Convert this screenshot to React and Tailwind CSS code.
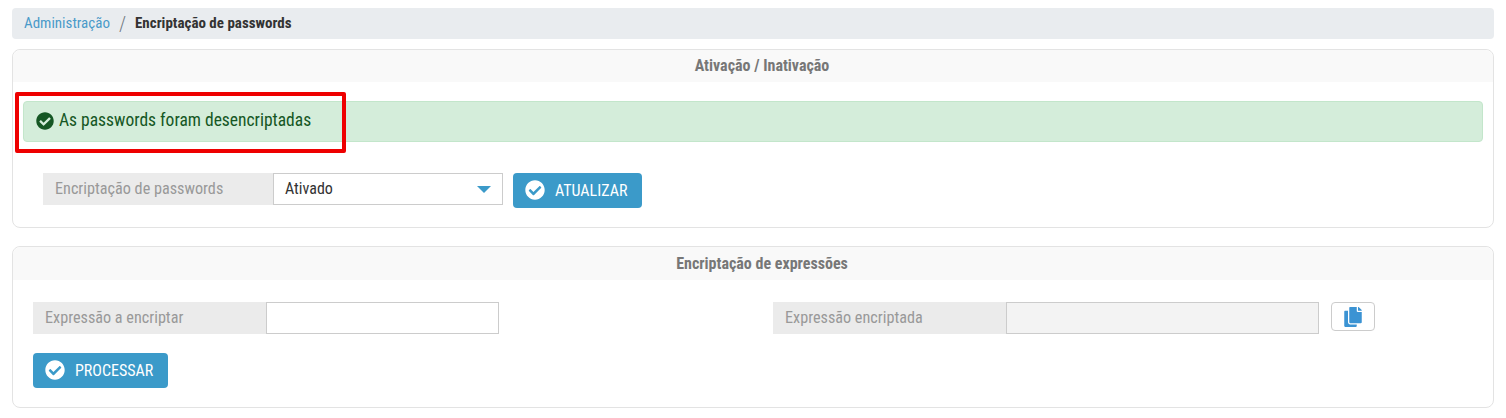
import React from "react";
import { FaCheckCircle, FaCopy } from "react-icons/fa";

const font = { fontFamily: "Roboto, sans-serif", fontStretch: "75%" };

function Btn({ label, width }) {
  return (
    <button className={`${width} h-[35px] rounded-[4px] bg-[#3b9ac9] text-white flex items-center pl-[12px] text-[16px]`}>
      <FaCheckCircle className="text-[20px] mr-[10px] shrink-0 -mt-[1px]" />
      <span className="whitespace-nowrap">{label}</span>
    </button>
  );
}

function Label({ children, width }) {
  return (
    <div className={`${width} h-[32px] bg-[#ebebeb] text-[#999999] text-[16.2px] flex items-center pl-[12px] shrink-0 whitespace-nowrap`}>
      {children}
    </div>
  );
}

function Head({ children, height }) {
  return (
    <div className={`${height} bg-[#f9f9f9] rounded-t-[8px] flex items-center justify-center pl-[18px] text-[16px] font-bold text-[#777777] whitespace-nowrap`}>
      {children}
    </div>
  );
}

export default function App() {
  return (
    <div className="relative w-[1506px] h-[418px] bg-white overflow-hidden pt-[8px] px-[12px]" style={font}>
      <div className="h-[31px] bg-[#e9ecef] rounded-[4px] flex items-center pl-[12px] text-[15px] whitespace-nowrap">
        <a className="text-[#4a9ac9] w-[86px]">Administração</a>
        <span className="text-[#6c757d] text-[20px] leading-none w-[25px] text-center font-light">/</span>
        <span className="font-bold text-[#333333]">Encriptação de passwords</span>
      </div>

      <div className="mt-[10px] h-[179px] border border-[#e3e3e3] rounded-[8px]">
        <Head height="h-[32px]">Ativação / Inativação</Head>
        <div className="mt-[19px] mx-[10px] h-[41px] bg-[#d4edda] border border-[#c3e6cb] rounded-[4px] flex items-center pl-[12px] text-[#155724] text-[17.5px] whitespace-nowrap">
          <FaCheckCircle className="text-[18px] mr-[5px] shrink-0 -mt-[2px]" />
          <span className="-mt-[2px]">As passwords foram desencriptadas</span>
        </div>
        <div className="mt-[31px] ml-[30px] flex items-start">
          <Label width="w-[230px]">Encriptação de passwords</Label>
          <div className="w-[230px] h-[32px] border border-[#cccccc] bg-white flex items-center justify-between pl-[11px] pr-[11px] text-[16px] text-[#333333]">
            <span>Ativado</span>
            <span className="w-0 h-0 border-l-[7px] border-r-[7px] border-t-[7px] border-l-transparent border-r-transparent border-t-[#3b9ac9]" />
          </div>
          <div className="ml-[10px]"><Btn label="ATUALIZAR" width="w-[129px]" /></div>
        </div>
      </div>

      <div className="mt-[18px] h-[162px] border border-[#e3e3e3] rounded-[8px]">
        <Head height="h-[33px]">Encriptação de expressões</Head>
        <div className="mt-[22px] ml-[20px] flex items-start">
          <div className="flex w-[740px]">
            <Label width="w-[233px]">Expressão a encriptar</Label>
            <div className="w-[233px] h-[32px] border border-[#cccccc] bg-white" />
          </div>
          <div className="flex items-start">
            <Label width="w-[233px]">Expressão encriptada</Label>
            <div className="w-[313px] h-[32px] border border-[#cccccc] bg-[#f3f3f3]" />
            <button className="ml-[12px] w-[44px] h-[29px] border border-[#cccccc] rounded-[4px] bg-white flex items-center justify-center text-[#3b93d3]">
              <FaCopy className="text-[20px]" />
            </button>
          </div>
        </div>
        <div className="mt-[19px] ml-[20px]"><Btn label="PROCESSAR" width="w-[135px]" /></div>
      </div>

      <div className="absolute left-[15px] top-[92px] w-[331px] h-[61px] border-[4px] border-[#ee0000] rounded-[2px]" />
    </div>
  );
}
